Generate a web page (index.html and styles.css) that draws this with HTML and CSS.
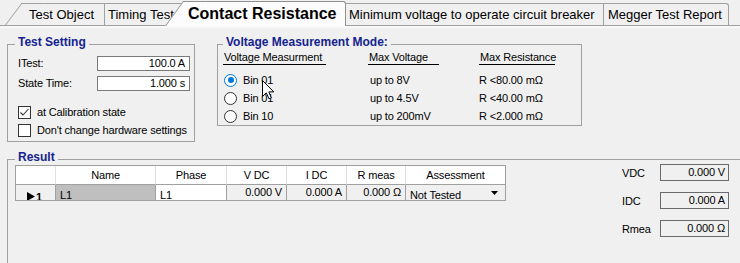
FILE: index.html
```html
<!DOCTYPE html>
<html lang="en">
<head>
  <meta charset="UTF-8">
  <title>Contact Resistance</title>
  <link rel="stylesheet" href="styles.css">
</head>
<body>
  <div class="tabs">
    <div class="tab tab-first">Test Object</div>
    <div class="tab tab-timing">Timing Test</div>
    <div class="tab tab-active">Contact Resistance</div>
    <div class="tab tab-minv">Minimum voltage to operate circuit breaker</div>
    <div class="tab tab-report">Megger Test Report</div>
  </div>

  <div class="panel">
    <div class="top-row">
      <div class="group setting">
        <div class="group-title">Test Setting</div>
        <div class="setting-body">
          <div class="field">
            <span class="field-label">ITest:</span>
            <span class="input">100.0 A</span>
          </div>
          <div class="field">
            <span class="field-label">State Time:</span>
            <span class="input">1.000 s</span>
          </div>
          <div class="checks">
            <label class="check">
              <span class="box">
                <svg width="11" height="11" viewBox="0 0 11 11"><polyline points="1.5,5.5 4,8 9.5,2" fill="none" stroke="#333" stroke-width="1.1"/></svg>
              </span>
              at Calibration state
            </label>
            <label class="check">
              <span class="box"></span>
              Don't change hardware settings
            </label>
          </div>
        </div>
      </div>

      <div class="group mode">
        <div class="group-title">Voltage Measurement Mode:</div>
        <div class="mode-body">
          <div class="mode-row mode-head">
            <span class="col-head head-1">Voltage Measurment</span>
            <span class="col-head head-2">Max Voltage</span>
            <span class="col-head head-3">Max Resistance</span>
          </div>
          <div class="mode-row">
            <span class="radio-cell"><span class="radio selected"></span>Bin 01</span>
            <span class="volt">up to 8V</span>
            <span>R &lt;80.00 m&Omega;</span>
          </div>
          <div class="mode-row">
            <span class="radio-cell"><span class="radio"></span>Bin 01</span>
            <span class="volt">up to 4.5V</span>
            <span>R &lt;40.00 m&Omega;</span>
          </div>
          <div class="mode-row">
            <span class="radio-cell"><span class="radio"></span>Bin 10</span>
            <span class="volt">up to 200mV</span>
            <span>R &lt;2.000 m&Omega;</span>
          </div>
        </div>
      </div>
    </div>

    <div class="group result">
      <div class="group-title">Result</div>
      <div class="result-body">
        <table class="grid">
          <colgroup>
            <col style="width:40px"><col style="width:100px"><col style="width:71px"><col style="width:60px">
            <col style="width:60px"><col style="width:59px"><col style="width:100px">
          </colgroup>
          <thead>
            <tr>
              <th></th><th>Name</th><th>Phase</th><th>V DC</th><th>I DC</th><th>R meas</th><th>Assessment</th>
            </tr>
          </thead>
          <tbody>
            <tr>
              <td class="row-head"><div class="cell low">
                <svg width="8" height="9" viewBox="0 0 8 9"><polygon points="0,0 8,4.5 0,9" fill="#000"/></svg>1
              </div></td>
              <td class="name"><div class="cell low">L1</div></td>
              <td class="phase"><div class="cell low">L1</div></td>
              <td class="num"><div class="cell">0.000 V</div></td>
              <td class="num"><div class="cell">0.000 A</div></td>
              <td class="num"><div class="cell">0.000 &Omega;</div></td>
              <td class="assess"><div class="cell low">Not Tested
                <svg class="drop" width="7" height="4" viewBox="0 0 7 4"><polygon points="0,0 7,0 3.5,4" fill="#000"/></svg>
              </div></td>
            </tr>
          </tbody>
        </table>

        <div class="readouts">
          <div class="readout"><span class="readout-label">VDC</span><span class="readout-box">0.000 V</span></div>
          <div class="readout"><span class="readout-label">IDC</span><span class="readout-box">0.000 A</span></div>
          <div class="readout"><span class="readout-label">Rmea</span><span class="readout-box">0.000 &Omega;</span></div>
        </div>
      </div>
    </div>
  </div>

  <svg class="cursor" width="13" height="20" viewBox="0 0 13 20">
    <path d="M0.5 0.5 V16.5 L4.3 12.8 L7 18.8 L9.4 17.8 L6.8 11.9 H11.8 Z" fill="#fff" stroke="#000"/>
  </svg>
</body>
</html>
```

FILE: styles.css
```css
body {
  margin: 0;
  width: 740px;
  height: 263px;
  overflow: hidden;
  background-color: #f0f0f0;
  font-family: "Liberation Sans", Arial, sans-serif;
  font-size: 11px;
  letter-spacing: -0.15px;
  color: #000;
  position: relative;
}

/* tab strip */
.tabs {
  display: flex;
  align-items: flex-end;
  height: 25px;
  border-bottom: 1px solid #a0a0a0;
  padding-left: 22px;
}
.tab {
  position: relative;
  z-index: 1;
  box-sizing: border-box;
  height: 22px;
  line-height: 21px;
  font-size: 13px;
  letter-spacing: 0;
  white-space: nowrap;
  background-color: #f0f0f0;
  border-top: 1px solid #a0a0a0;
  border-right: 1px solid #a0a0a0;
}
.tab-first {
  width: 83px;
  padding-left: 7px;
}
.tab-first::before,
.tab-active::before {
  content: "";
  position: absolute;
  z-index: -1;
  top: -1px;
  bottom: 0;
  left: -17px;
  width: 22px;
  background-color: #f0f0f0;
  border-top: 1px solid #a0a0a0;
  border-left: 1px solid #a0a0a0;
  transform-origin: bottom left;
  transform: skewX(-37deg);
}
.tab-timing {
  width: 78px;
  padding-left: 3px;
  overflow: hidden;
  z-index: 0;
}
.tab-active {
  z-index: 2;
  width: 163px;
  height: 25px;
  line-height: 24px;
  margin-bottom: -1px;
  padding-left: 5px;
  font-size: 16px;
  font-weight: bold;
  background-color: #fcfcfc;
  border-color: #909090;
  border-top-right-radius: 3px;
}
.tab-active::before {
  left: -18px;
  background-color: #fcfcfc;
  border-color: #909090;
  transform: skewX(-36deg);
}
.tab-minv {
  width: 258px;
  padding-left: 3px;
}
.tab-report {
  width: 125px;
  padding-left: 4px;
  border-top-right-radius: 3px;
}

/* content */
.panel {
  border-top: 2px solid #f8f8f8;
  padding: 16px 0 0 7px;
}
.top-row {
  display: flex;
  align-items: flex-start;
}
.group {
  box-sizing: border-box;
  border: 1px solid #a0a0a0;
}
.group-title {
  width: fit-content;
  margin: -10px 0 0 7px;
  padding: 0 3px;
  line-height: 14px;
  font-size: 12px;
  font-weight: bold;
  letter-spacing: 0;
  color: #14238f;
  background-color: #f0f0f0;
}

.setting {
  width: 188px;
  height: 98px;
}
.setting-body {
  padding: 4px 0 0 10px;
}
.field {
  display: flex;
  align-items: center;
  height: 20px;
}
.field-label {
  width: 79px;
}
.input {
  box-sizing: border-box;
  width: 93px;
  height: 15px;
  line-height: 13px;
  padding-right: 4px;
  text-align: right;
  background-color: #fff;
  border: 1px solid #7a7a7a;
}
.checks {
  margin-top: 10px;
}
.check {
  display: flex;
  align-items: center;
  height: 18px;
}
.box {
  box-sizing: border-box;
  width: 13px;
  height: 13px;
  margin-right: 6px;
  border: 1px solid #333;
  background-color: #fff;
}
.box svg {
  display: block;
}

.mode {
  width: 365px;
  height: 82px;
  margin-left: 22px;
}
.mode .group-title {
  margin-left: 5px;
}
.mode-body {
  padding: 2px 0 0 5px;
}
.mode-row {
  display: grid;
  grid-template-columns: 145px 111px 100px;
  align-items: center;
  height: 18px;
  white-space: nowrap;
}
.mode-head {
  height: 14px;
  align-items: start;
  margin-bottom: 6px;
}
.col-head {
  height: 13px;
  line-height: 13px;
  padding-left: 1px;
  border-bottom: 1px solid #000;
}
.head-1 { width: 102px; }
.head-2 { width: 70px; }
.head-3 { width: 75px; }
.radio-cell {
  display: flex;
  align-items: center;
  padding-left: 1px;
}
.radio {
  box-sizing: border-box;
  width: 13px;
  height: 13px;
  margin-right: 6px;
  border: 1px solid #333;
  border-radius: 50%;
  background-color: #fff;
  position: relative;
}
.radio.selected {
  border-color: #0078d7;
}
.radio.selected::after {
  content: "";
  position: absolute;
  left: 2.5px;
  top: 2.5px;
  width: 6px;
  height: 6px;
  border-radius: 50%;
  background-color: #0078d7;
}
.volt {
  padding-left: 2px;
}

/* result */
.result {
  margin-top: 17px;
  margin-right: -40px;
  height: 120px;
}
.result-body {
  display: flex;
  align-items: flex-start;
  padding: 1px 0 0 7px;
}
.grid {
  table-layout: fixed;
  width: 491px;
  border-spacing: 0;
  border-top: 1px solid #a0a0a0;
  border-left: 1px solid #a0a0a0;
}
.grid th {
  padding: 0;
  height: 18px;
  line-height: 18px;
  font-weight: normal;
  text-align: center;
  background-color: #fff;
  border-right: 1px solid #e0e0e0;
  border-bottom: 1px solid #a0a0a0;
}
.grid th:last-child {
  border-right-color: #a0a0a0;
}
.grid td {
  padding: 0;
  height: 15px;
  border-right: 1px solid #a0a0a0;
  border-bottom: 1px solid #a0a0a0;
  background-color: #f0f0f0;
}
.cell {
  height: 15px;
  line-height: 15px;
  overflow: hidden;
  white-space: nowrap;
  padding: 0 4px;
}
.cell.low {
  box-sizing: border-box;
  padding-top: 3px;
  line-height: 14px;
}
.row-head .cell {
  padding: 5px 0 0 11px;
  font-weight: bold;
}
.row-head svg {
  margin-right: 1px;
}
.grid .name {
  background-color: #bfbfbf;
}
.grid .phase {
  background-color: #fff;
}
.num .cell {
  text-align: right;
}
.assess .cell {
  position: relative;
}
.drop {
  position: absolute;
  right: 7px;
  top: 6px;
}

.readouts {
  display: flex;
  flex-direction: column;
  gap: 11px;
  margin: -1px 0 0 116px;
}
.readout {
  display: flex;
  align-items: center;
  height: 17px;
}
.readout-label {
  width: 38px;
}
.readout-box {
  box-sizing: border-box;
  width: 69px;
  height: 17px;
  line-height: 15px;
  padding-right: 3px;
  text-align: right;
  border: 1px solid #6a6a6a;
}

.cursor {
  position: absolute;
  left: 262px;
  top: 80px;
}
```
